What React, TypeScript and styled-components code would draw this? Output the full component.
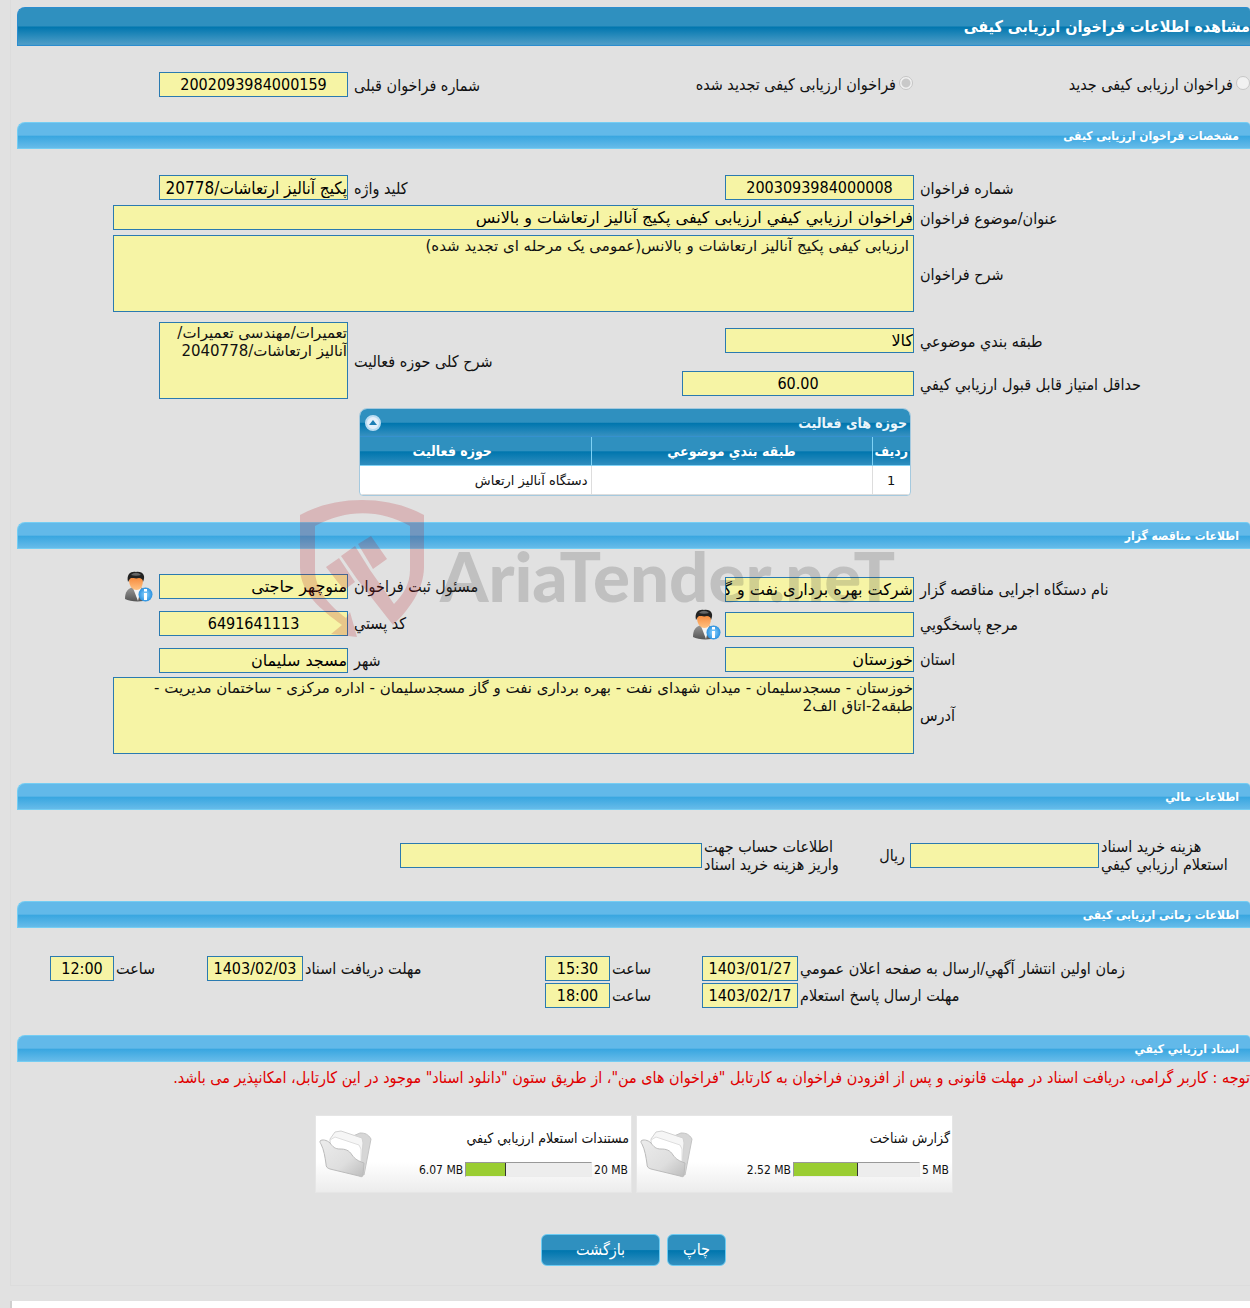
import React from 'react';
import styled, { createGlobalStyle } from 'styled-components';

const condensed = '"DejaVu Sans Condensed", "DejaVu Sans", Tahoma, sans-serif';
const regular = '"DejaVu Sans", Tahoma, sans-serif';

const inputFonts = {
  text: `16px/20px ${regular}`,
  number: `16px/20px ${condensed}`,
  mixed: `17px/20px ${condensed}`,
};

type Kind = keyof typeof inputFonts;

const Global = createGlobalStyle`
  *, *::before, *::after { box-sizing: border-box; }
  body {
    margin: 0;
    background: #e1e1e1;
    color: #111;
    font: 16px/18px ${condensed};
    overflow-x: hidden;
  }
`;

const Page = styled.div`
  direction: rtl;
  position: relative;
`;

const Panel = styled.main`
  margin-left: 10px;
  padding: 7px 0 19px 6px;
  border-left: 1px solid #dcdcdc;
  border-bottom: 1px solid #dcdcdc;
`;

const Foot = styled.footer`
  margin: 15px 0 0 10px;
  height: 7px;
  border-left: 2px solid #cfcfcf;
  background: #fff;
`;

const Title = styled.h1`
  margin: 0;
  height: 39px;
  border: 1px solid #2b8dcf;
  border-right: 0;
  border-radius: 8px 4px 0 0;
  background: linear-gradient(#2f90bf 0 49%, #0076ae 51%, #4a9bc6 96%);
  color: #fff;
  font-size: 16px;
  line-height: 37px;
`;

const Heading = styled.h2`
  margin: 0;
  height: 27px;
  padding-right: 11px;
  border: 1px solid #74cdf3;
  border-right: 0;
  border-radius: 8px 4px 0 0;
  background: linear-gradient(#62b9e9 0 49%, #38a6e0 52%, #66bbe9);
  color: #fff;
  font-size: 12px;
  line-height: 27px;
`;

const Body = styled.section<{ $top?: number; $bottom?: number }>`
  padding: ${p => p.$top ?? 26}px 0 ${p => p.$bottom ?? 27}px;
`;

const Split = styled.div`
  display: flex;
  justify-content: space-between;
`;

const Stack = styled.div<{ $gap: number; $pad?: number }>`
  display: flex;
  flex-direction: column;
  gap: ${p => p.$gap}px;
  padding-top: ${p => p.$pad ?? 0}px;
`;

const Line = styled.div`
  display: grid;
  grid-template-columns: 330px minmax(0, 1fr);
  column-gap: 6px;
  align-items: center;
`;

const FieldCell = styled.div`
  display: flex;
  gap: 4px;
`;

const Side = styled(Stack)`
  width: 583px;
`;

const SideLine = styled.div`
  display: grid;
  grid-template-columns: minmax(0, 1fr) 189px 136px;
  column-gap: 6px;
  align-items: center;
`;

const Label = styled.label`
  padding-top: 2px;
  text-align: left;
  white-space: nowrap;
`;

const Input = styled.input<{ $w?: number; $kind?: Kind }>`
  display: block;
  width: ${p => (p.$w ? p.$w + 'px' : '100%')};
  height: 25px;
  margin: 0;
  padding: 0;
  border: 1px solid #2a7ab0;
  border-radius: 0;
  background: #f6f4a5;
  color: #000;
  font: ${p => inputFonts[p.$kind ?? 'text']};
  text-align: ${p => (p.$kind === 'number' ? 'center' : 'right')};
  outline: 0;
`;

const Area = styled.textarea<{ $pad?: number }>`
  display: block;
  width: 100%;
  height: 77px;
  padding: 1px ${p => p.$pad ?? 0}px 0;
  border: 1px solid #2a7ab0;
  background: #f6f4a5;
  color: #111;
  font: 15px/18px ${regular};
  resize: none;
  overflow: hidden;
  outline: 0;
`;

const Wide = styled.div`
  padding-left: 96px;
`;

const RadioRow = styled.div`
  display: grid;
  grid-template-columns: 337px minmax(0, 1fr) 583px;
  align-items: center;
  padding: 26px 0 25px;
`;

const Choice = styled.label`
  display: flex;
  align-items: center;
  gap: 3px;
`;

const Radio = styled.input`
  appearance: none;
  width: 14px;
  height: 14px;
  margin: 0 0 4px;
  border: 1px solid #c6c6c6;
  border-radius: 50%;
  background: #f1f1f1;
  &:checked { background: radial-gradient(circle, #c9c9c9 0 4px, #f1f1f1 5px); }
`;

const TableBox = styled.div`
  width: 552px;
  margin: 9px 339px 0 0;
  border: 1px solid #a5c9de;
  border-radius: 8px 8px 4px 4px;
  overflow: hidden;
  background: #fff;
`;

const TableTop = styled.div`
  display: flex;
  align-items: center;
  justify-content: space-between;
  height: 28px;
  padding: 0 3px 0 5px;
  border-bottom: 1px solid #3591cf;
  background: linear-gradient(#2f90bf 0 49%, #0076ae 53%, #3690c0);
  color: #e9f5fb;
  font-size: 14px;
  font-weight: bold;
`;

const Toggle = styled.button`
  display: grid;
  place-items: center;
  width: 16px;
  height: 16px;
  padding: 0;
  border: 2px solid #b9dcf2;
  border-radius: 50%;
  background: #e3effa;
`;

const Table = styled.table`
  width: 100%;
  border-collapse: collapse;
  table-layout: fixed;
  th {
    height: 28px;
    padding: 0 2px;
    border-left: 1px solid #7fd2f5;
    border-bottom: 1px solid #7fd2f5;
    background: linear-gradient(#2f90bf 0 49%, #0076ae 53%, #2f8dbe);
    color: #fff;
    font-size: 14px;
    white-space: nowrap;
  }
  th:last-child, td:last-child { border-left: 0; }
  th:first-child, td:first-child { width: 38px; }
  th:last-child { width: 231px; padding-right: 48px; }
  td {
    height: 29px;
    padding: 2px 3px 0;
    border-left: 1px solid #ddd;
    border-bottom: 1px solid #ddd;
    font: 13px/18px ${regular};
  }
  td:first-child { text-align: center; }
`;

const IconButton = styled.button`
  width: 30px;
  height: 30px;
  margin: -3px 0;
  padding: 0;
  border: 0;
  background: none;
`;

const MoneyRow = styled.div`
  display: grid;
  grid-template-columns: 149px 189px 204px 302px;
  column-gap: 2px;
  align-items: center;
`;

const Unit = styled.span`
  padding-right: 3px;
`;

const MoneyCell = styled.div`
  display: flex;
  justify-content: space-between;
  align-items: center;
`;

const MoneyLabel = styled(Label)`
  justify-self: end;
  padding-top: 0;
  text-align: left;
`;

const TimeRow = styled.div`
  display: grid;
  grid-template-columns: 450px 96px 88px 65px 238px 96px 89px 64px;
  column-gap: 2px;
  align-items: center;
`;

const Notice = styled.p`
  margin: 0;
  padding: 7px 0 0;
  color: #e00000;
  white-space: nowrap;
`;

const Cards = styled.div`
  display: flex;
  justify-content: center;
  gap: 4px;
  padding: 28px 0 41px 1px;
`;

const Card = styled.article`
  display: flex;
  justify-content: space-between;
  width: 317px;
  height: 78px;
  padding: 13px 2px 0 3px;
  border: 1px solid #e6e6e6;
  background: linear-gradient(#fff 60%, #ececec);
`;

const CardTitle = styled.span`
  font-size: 14px;
`;

const Meter = styled.div`
  display: flex;
  align-items: center;
  gap: 2px;
  margin-top: 14px;
  padding-right: 1px;
  direction: ltr;
  font-size: 12px;
`;

const Bar = styled.div`
  width: 127px;
  height: 15px;
  border: 1px solid #ececec;
  border-top-color: #999;
  border-left-color: #999;
  background: #ededed;
`;

const Fill = styled.div`
  height: 100%;
  border-right: 1px solid #333;
  background: #9acd32;
`;

const CardInfo = styled.div`
  display: flex;
  flex-direction: column;
  align-items: flex-start;
`;

const Actions = styled.div`
  display: flex;
  justify-content: center;
  gap: 7px;
`;

const Button = styled.button<{ $w: number }>`
  width: ${p => p.$w}px;
  height: 32px;
  padding: 0;
  border: 1px solid #6ccbf2;
  border-radius: 6px;
  background: linear-gradient(#2f90bf 0 49%, #0076ae 52%, #3390c0);
  color: #fff;
  font: inherit;
`;

const Watermark = styled.div`
  position: absolute;
  top: 498px;
  left: 298px;
  display: flex;
  direction: ltr;
  pointer-events: none;
`;

const Brand = styled.span`
  padding: 38px 0 0 14px;
  color: rgba(60, 60, 60, 0.2);
  font: 900 69px/80px Lato, sans-serif;
`;

function Person() {
  return (
    <svg width="30" height="32" viewBox="0 0 30 32" aria-hidden="true">
      <defs>
        <linearGradient id="suit" x2="0" y2="1"><stop stopColor="#999" /><stop offset="1" stopColor="#555" /></linearGradient>
        <linearGradient id="face" x2="0" y2="1"><stop stopColor="#f47b28" /><stop offset="1" stopColor="#ffc283" /></linearGradient>
        <radialGradient id="info"><stop stopColor="#8fd4ff" /><stop offset="1" stopColor="#2c92e0" /></radialGradient>
      </defs>
      <path d="M2 28C2 20 5 18 10 16h7c5 2 8 5 8 13-6 2-18 2-23-1z" fill="url(#suit)" />
      <path d="M10 17l5 13 3-13z" fill="#f4f4f4" />
      <path d="M6 8c0 7 3 11 7.500 11S20 15 20 8c0-3-3-5-7-5S6 5 6 8z" fill="url(#face)" />
      <path d="M5 11C3 2 9 0 13 1c7-1 10 4 7 10 0-3-2-4-4-4-3 1-5 0-8 0-2 1-2 3-3 4z" fill="#222" />
      <path d="M8 4c3-3 7-3 10 0-3 1-7 1-10 0z" fill="#666" />
      <circle cx="22.500" cy="23.500" r="7" fill="url(#info)" />
      <path d="M21 18h3v2.500h-3zM21 22h3v7h-3z" fill="#fff" />
    </svg>
  );
}

function Folder() {
  return (
    <svg width="54" height="50" viewBox="0 0 54 50" aria-hidden="true">
      <defs>
        <linearGradient id="front" x2="1" y2="1"><stop stopColor="#ececec" /><stop offset=".6" stopColor="#dedede" /><stop offset="1" stopColor="#bcbcbc" /></linearGradient>
      </defs>
      <path d="M34 7l7-3c5 0 8 1 11 6l-7 36-4-3z" fill="#d6d6d6" stroke="#c4c4c4" />
      <path d="M11 10l5-7 6-1 21 7 1 5-2 22-30-18z" fill="#f6f6f6" stroke="#d2d2d2" />
      <path d="M11 11l5-3 24 8 2 4v14L12 20z" fill="#fff" stroke="#dedede" />
      <path d="M1 12c2-2 7-1 10 2 3 4 5 6 10 6 5 0 9 1 12 6 3 4 6 6 12 8l-1 12c0 2-2 2-4 1L11 40c-3-1-4-2-4-5C6 28 5 21 2 15c-1-1-1-2-1-3z" fill="url(#front)" stroke="#bbb" />
    </svg>
  );
}

type FieldProps = { id: string; label: string; value: string; w?: number; kind?: Kind; person?: boolean };

function MainField({ id, label, value, w = 189, kind, person }: FieldProps) {
  return (
    <Line>
      <Label htmlFor={id}>{label}</Label>
      <FieldCell>
        <Input id={id} $w={w} $kind={kind} defaultValue={value} readOnly />
        {person && <IconButton aria-label={label}><Person /></IconButton>}
      </FieldCell>
    </Line>
  );
}

function SideField({ id, label, value, kind, person }: FieldProps) {
  return (
    <SideLine>
      <Label htmlFor={id}>{label}</Label>
      <Input id={id} $kind={kind} defaultValue={value} readOnly />
      {person && <IconButton aria-label={label}><Person /></IconButton>}
    </SideLine>
  );
}

function WideArea({ id, label, value, pad }: { id: string; label: string; value: string; pad?: number }) {
  return (
    <Line>
      <Label htmlFor={id}>{label}</Label>
      <Wide><Area id={id} $pad={pad} defaultValue={value} readOnly /></Wide>
    </Line>
  );
}

function TimePair({ id, label, date, time }: { id: string; label: string; date: string; time: string }) {
  return (
    <>
      <Label htmlFor={id}>{label}</Label>
      <Input id={id} $kind="number" defaultValue={date} readOnly />
      <Label htmlFor={id + '-time'}>ساعت</Label>
      <Input id={id + '-time'} $kind="number" defaultValue={time} readOnly />
    </>
  );
}

function FileCard({ title, used, total, share }: { title: string; used: string; total: string; share: number }) {
  return (
    <Card>
      <CardInfo>
        <CardTitle>{title}</CardTitle>
        <Meter>
          <span>{used}</span>
          <Bar><Fill style={{ width: share + '%' }} /></Bar>
          <span>{total}</span>
        </Meter>
      </CardInfo>
      <Folder />
    </Card>
  );
}

export default function App() {
  return (
    <Page lang="fa">
      <Global />
      <Panel>
        <Title>مشاهده اطلاعات فراخوان ارزیابی کیفی</Title>
        <RadioRow>
          <Choice><Radio type="radio" name="kind" disabled />فراخوان ارزیابی کیفی جدید</Choice>
          <Choice><Radio type="radio" name="kind" defaultChecked disabled />فراخوان ارزیابی کیفی تجدید شده</Choice>
          <SideField id="prev" label="شماره فراخوان قبلی" value="2002093984000159" kind="number" />
        </RadioRow>

        <Heading>مشخصات فراخوان ارزیابی کیفی</Heading>
        <Body $bottom={26}>
          <Stack $gap={5}>
            <Split>
              <MainField id="num" label="شماره فراخوان" value="2003093984000008" kind="number" />
              <Side $gap={0}><SideField id="key" label="کلید واژه" value="پکیج آنالیز ارتعاشات/20778" kind="mixed" /></Side>
            </Split>
            <Line>
              <Label htmlFor="subject">عنوان/موضوع فراخوان</Label>
              <Wide><Input id="subject" defaultValue="فراخوان ارزيابي کيفي ارزیابی کیفی پکیج آنالیز ارتعاشات و بالانس" readOnly /></Wide>
            </Line>
            <WideArea id="desc" label="شرح فراخوان" value="ارزیابی کیفی پکیج آنالیز ارتعاشات و بالانس(عمومی یک مرحله ای تجدید شده)" pad={4} />
          </Stack>
          <Split>
            <Stack $gap={18} $pad={16}>
              <MainField id="class" label="طبقه بندي موضوعي" value="کالا" />
              <MainField id="score" label="حداقل امتیاز قابل قبول ارزيابي کيفي" value="60.00" w={232} kind="number" />
            </Stack>
            <Side $gap={0} $pad={10}>
              <SideLine>
                <Label htmlFor="scope">شرح کلی حوزه فعالیت</Label>
                <Area id="scope" defaultValue="تعمیرات/مهندسی تعمیرات/آنالیز ارتعاشات/2040778" readOnly />
              </SideLine>
            </Side>
          </Split>
          <TableBox>
            <TableTop>
              <span>حوزه های فعالیت</span>
              <Toggle aria-label="حوزه های فعالیت">
                <svg width="8" height="5" viewBox="0 0 8 5"><path d="M0 5l4-5 4 5z" fill="#1d7fb5" /></svg>
              </Toggle>
            </TableTop>
            <Table>
              <thead><tr><th>ردیف</th><th>طبقه بندي موضوعي</th><th>حوزه فعالیت</th></tr></thead>
              <tbody><tr><td>1</td><td /><td>دستگاه آنالیز ارتعاش</td></tr></tbody>
            </Table>
          </TableBox>
        </Body>

        <Heading>اطلاعات مناقصه گزار</Heading>
        <Body $top={25} $bottom={29}>
          <Split>
            <Stack $gap={10} $pad={3}>
              <MainField id="org" label="نام دستگاه اجرایی مناقصه گزار" value="شرکت بهره برداری نفت و گاز" />
              <MainField id="ref" label="مرجع پاسخگويي" value="" person />
              <MainField id="state" label="استان" value="خوزستان" />
            </Stack>
            <Side $gap={12}>
              <SideField id="owner" label="مسئول ثبت فراخوان" value="منوچهر حاجتی" person />
              <SideField id="zip" label="کد پستي" value="6491641113" kind="number" />
              <SideField id="city" label="شهر" value="مسجد سلیمان" />
            </Side>
          </Split>
          <Stack $gap={0} $pad={4}>
            <WideArea id="address" label="آدرس" value="خوزستان - مسجدسلیمان - میدان شهدای نفت - بهره برداری نفت و گاز مسجدسلیمان - اداره مرکزی - ساختمان مدیریت - طبقه2-اتاق الف2" />
          </Stack>
        </Body>

        <Heading>اطلاعات مالي</Heading>
        <Body $top={28}>
          <MoneyRow>
            <MoneyLabel htmlFor="cost">هزینه خرید اسناد<br />استعلام ارزيابي کيفي</MoneyLabel>
            <Input id="cost" readOnly />
            <MoneyCell>
              <Unit>ریال</Unit>
              <MoneyLabel htmlFor="account">اطلاعات حساب جهت<br />واریز هزینه خرید اسناد</MoneyLabel>
            </MoneyCell>
            <Input id="account" readOnly />
          </MoneyRow>
        </Body>

        <Heading>اطلاعات زمانی ارزیابی کیفی</Heading>
        <Body $top={28}>
          <Stack $gap={2}>
            <TimeRow>
              <TimePair id="publish" label="زمان اولین انتشار آگهي/ارسال به صفحه اعلان عمومي" date="1403/01/27" time="15:30" />
              <TimePair id="receive" label="مهلت دریافت اسناد" date="1403/02/03" time="12:00" />
            </TimeRow>
            <TimeRow>
              <TimePair id="answer" label="مهلت ارسال پاسخ استعلام" date="1403/02/17" time="18:00" />
            </TimeRow>
          </Stack>
        </Body>

        <Heading>اسناد ارزيابي کيفي</Heading>
        <Notice>توجه : کاربر گرامی، دریافت اسناد در مهلت قانونی و پس از افزودن فراخوان به کارتابل "فراخوان های من"، از طریق ستون "دانلود اسناد" موجود در این کارتابل، امکانپذیر می باشد.</Notice>
        <Cards>
          <FileCard title="گزارش شناخت" used="2.52 MB" total="5 MB" share={51} />
          <FileCard title="مستندات استعلام ارزيابي کيفي" used="6.07 MB" total="20 MB" share={32} />
        </Cards>
        <Actions>
          <Button $w={59}>چاپ</Button>
          <Button $w={119}>بازگشت</Button>
        </Actions>
      </Panel>
      <Foot />
      <Watermark aria-hidden="true">
        <svg width="128" height="142" viewBox="0 0 128 142">
          <g fill="#b40f19" fillOpacity=".2">
            <path d="M2 17C38-3 90-3 126 17V69C126 91 111 112 95 127L59 81 43 58 57 48 72 72 96 106C105 97 112 86 112 72V28C82 11 48 11 17 28V72C17 92 32 108 48 120L52 114 59 139 33 136 44 127C24 112 2 96 2 69z" />
            <path d="M28 69l13-9 16 24-11 8zM60 46l13-8 16 23-14 10z" />
          </g>
        </svg>
        <Brand>AriaTender.neT</Brand>
      </Watermark>
    </Page>
  );
}
